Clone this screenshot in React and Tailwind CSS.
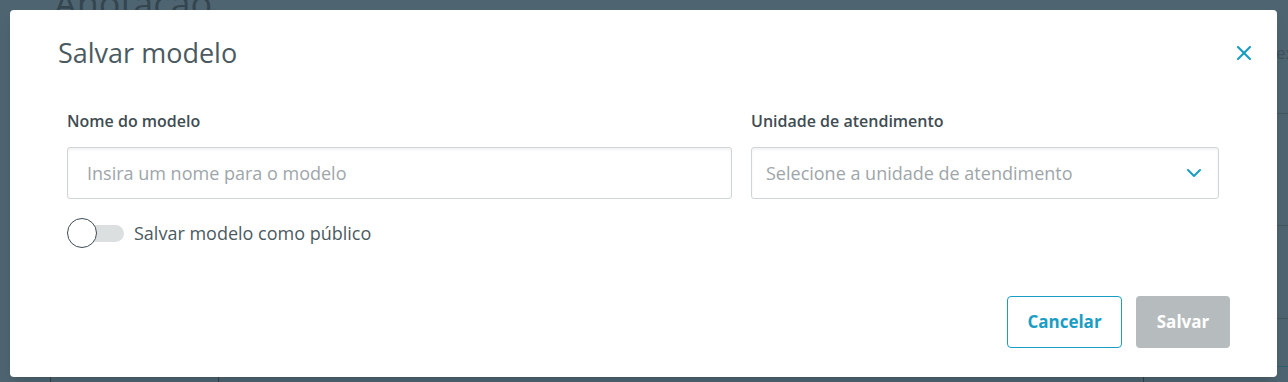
import { ChevronDown, X } from 'lucide-react';

export default function App() {
  return (
    <div
      className="relative w-[1288px] h-[382px] overflow-hidden bg-[#4e6571]"
      style={{ fontFamily: "'Open Sans', Lato, sans-serif" }}
    >
      {/* Page behind the overlay */}
      <div className="absolute left-[54px] top-[-23px] text-[36px] text-[#34454f]">Anotação</div>
      <div className="absolute left-[1276px] top-[40px] text-[17px] text-[#3e515c]">ex</div>
      <div className="absolute left-[1277px] right-0 top-[113px] h-px bg-[#43575f]" />
      <div className="absolute left-[1277px] right-0 top-[225px] h-px bg-[#43575f]" />
      <div className="absolute left-[1277px] right-0 top-[318px] h-px bg-[#43575f]" />
      <div className="absolute left-[1277px] right-0 top-[366px] h-px bg-[#2f5f70]" />
      <div className="absolute left-[50px] top-[370px] bottom-0 w-px bg-[#2d4450]" />
      <div className="absolute left-[218px] top-[370px] bottom-0 w-px bg-[#2d4450]" />
      <div className="absolute left-[1143px] top-[370px] bottom-0 w-px bg-[#2d4450]" />

      {/* Modal */}
      <div className="absolute left-[10px] top-[10px] w-[1267px] h-[367px] bg-white rounded-[4px] shadow-lg flex flex-col">
        <div className="flex items-start justify-between pl-[48px] pr-[21px] pt-[25px]">
          <h2 className="text-[27px] leading-[36px] text-[#4b5a61]">Salvar modelo</h2>
          <button className="mt-[6px] text-[#1a9dc4]">
            <X className="w-[24px] h-[24px]" strokeWidth={2.2} />
          </button>
        </div>

        <div className="pl-[57px] pt-[40px]">
          <div className="grid grid-cols-[665px_468px] gap-x-[19px]">
            <div>
              <label className="block text-[16px] font-semibold text-[#3f4c52] leading-[20px]">Nome do modelo</label>
              <input
                placeholder="Insira um nome para o modelo"
                className="mt-[16px] w-full h-[52px] px-[19px] border border-[#cfd4d6] rounded-[3px] shadow-[inset_0_2px_3px_rgba(0,0,0,0.05)] text-[18px] text-[#4b5a61] placeholder-[#9ea6aa] outline-none"
              />
            </div>
            <div>
              <label className="block text-[16px] font-semibold text-[#3f4c52] leading-[20px]">Unidade de atendimento</label>
              <div className="mt-[16px] w-full h-[52px] pl-[14px] pr-[12px] border border-[#cfd4d6] rounded-[3px] shadow-[inset_0_2px_3px_rgba(0,0,0,0.05)] flex items-center justify-between">
                <span className="text-[18px] text-[#9ea6aa]">Selecione a unidade de atendimento</span>
                <ChevronDown className="w-[24px] h-[24px] text-[#1a9dc4]" strokeWidth={2} />
              </div>
            </div>
          </div>

          <div className="mt-[19px] flex items-center">
            <div className="relative w-[57px] h-[30px] flex items-center">
              <div className="ml-[4px] w-[53px] h-[17px] rounded-full bg-[#dcdfe0]" />
              <div className="absolute left-0 top-0 w-[30px] h-[30px] rounded-full bg-white border border-[#3f4c52]" />
            </div>
            <span className="ml-[10px] text-[18px] text-[#4b5a61]">Salvar modelo como público</span>
          </div>
        </div>

        <div className="mt-auto mb-[29px] pr-[47px] flex justify-end gap-[14px]">
          <button className="w-[115px] h-[52px] rounded-[4px] border border-[#1a9dc4] text-[#1a9dc4] text-[17px] font-bold">
            Cancelar
          </button>
          <button className="w-[94px] h-[52px] rounded-[4px] bg-[#b6bcbe] text-white text-[17px] font-bold">
            Salvar
          </button>
        </div>
      </div>
    </div>
  );
}
